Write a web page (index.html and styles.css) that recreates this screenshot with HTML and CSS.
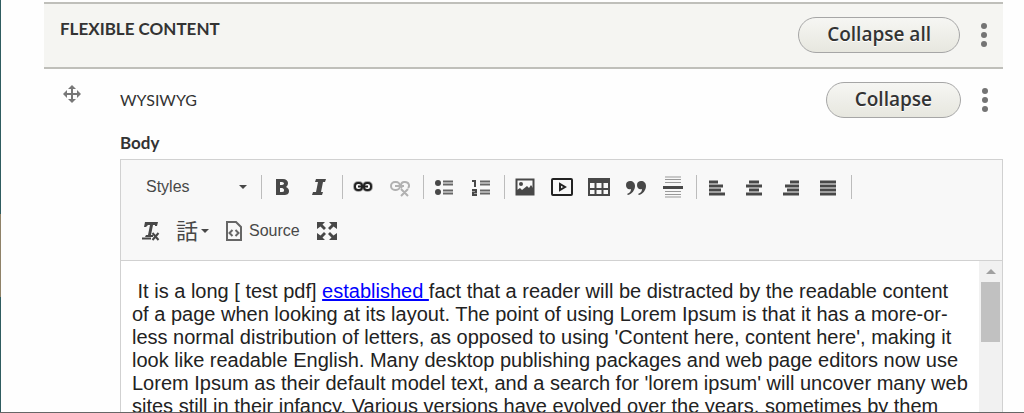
FILE: index.html
```html
<!DOCTYPE html>
<html lang="en">
<head>
  <meta charset="UTF-8" />
  <meta name="viewport" content="width=device-width, initial-scale=1.0" />
  <title>Edit content</title>
  <link rel="stylesheet" href="styles.css">
</head>
<body>
  <main class="page">
    <header class="field-header">
      <h4>FLEXIBLE CONTENT</h4>
      <div class="actions">
        <button type="button" class="btn">Collapse all</button>
        <button type="button" class="dots" aria-label="More actions"><svg width="8" height="26"><circle cx="4" cy="4" r="3"/><circle cx="4" cy="13" r="3"/><circle cx="4" cy="22" r="3"/></svg></button>
      </div>
    </header>

    <section class="paragraph">
      <a href="#" class="drag" aria-label="Drag to re-order">
        <svg width="18" height="18" viewBox="0 0 18 18"><path d="M9 0l4 4h-3v4h4V5l4 4-4 4v-3h-4v4h3l-4 4-4-4h3v-4H4v3L0 9l4-4v3h4V4H5z"/></svg>
      </a>
      <div class="paragraph-body">
        <div class="paragraph-top">
          <span class="type">WYSIWYG</span>
          <div class="actions">
            <button type="button" class="btn">Collapse</button>
            <button type="button" class="dots" aria-label="More actions"><svg width="8" height="26"><circle cx="4" cy="4" r="3"/><circle cx="4" cy="13" r="3"/><circle cx="4" cy="22" r="3"/></svg></button>
          </div>
        </div>
        <h5 class="label" id="body-label">Body</h5>

        <div class="editor">
          <div class="toolbar" role="toolbar" aria-label="Editor toolbar">
            <div class="tool-row">
              <button type="button" class="combo">Styles <span class="caret"></span></button>
              <span class="sep"></span>
              <button type="button" class="tool" aria-label="Bold"><svg width="20" height="20"><path fill-rule="evenodd" d="M4 2h7c3 0 5 2 5 4 0 2-1 3-2 4 2 1 3 2 3 4 0 3-2 4-5 4H4zm4 3v3h2c1 0 2-1 2-1.500S11 5 10 5zm0 6v4h2c2 0 2-1 2-2s-1-2-2-2z"/></svg></button>
              <button type="button" class="tool" aria-label="Italic"><svg width="20" height="20"><path d="M7 2h10l-1 3h-2l-2 10h2l-1 3H3l1-3h3L9 5H6z"/></svg></button>
              <span class="sep"></span>
              <button type="button" class="tool link" aria-label="Link"><svg width="20" height="20"><rect class="halo" x="1" y="5" width="9" height="9" rx="4"/><rect class="halo" x="10" y="5" width="9" height="9" rx="4"/><g class="line"><rect x="2" y="6" width="7" height="7" rx="3"/><rect x="11" y="6" width="7" height="7" rx="3"/><path d="M5 9.500h10"/></g></svg></button>
              <button type="button" class="tool" aria-label="Unlink" disabled><svg width="20" height="20"><g class="line"><rect x="1" y="5" width="9" height="8" rx="4"/><path d="M5 9h9M12 11c-2-2-1-6 2-6h1c4 0 5 4 3 6M11 12l7 7M18 12l-7 7"/></g></svg></button>
              <span class="sep"></span>
              <button type="button" class="tool" aria-label="Bulleted list"><svg width="20" height="20"><circle cx="4" cy="6" r="3"/><circle cx="4" cy="15" r="3"/><path class="lines" d="M9 4.500h10M9 7.500h10M9 13.500h10M9 16.500h10"/></svg></button>
              <button type="button" class="tool" aria-label="Numbered list"><svg width="20" height="20"><path class="line" d="M1 4h3v6M1 13h4v2.500H2V18h4"/><path class="lines" d="M9 4.500h10M9 7.500h10M9 13.500h10M9 16.500h10"/></svg></button>
              <span class="sep"></span>
              <button type="button" class="tool" aria-label="Image"><svg width="20" height="18"><path class="line" d="M1.500 1.500h17v15h-17z"/><circle cx="6" cy="6" r="2"/><path d="M2 16v-4l3-2 2 2 5-4 2 2 2-3 2 3v6z"/></svg></button>
              <button type="button" class="tool" aria-label="Video"><svg width="22" height="18"><rect class="line dark" x="1" y="1" width="20" height="16" rx="1"/><path class="line dark" d="M9 6v6l5-3z"/></svg></button>
              <button type="button" class="tool" aria-label="Table"><svg width="22" height="20"><path d="M0 1h22v5H0z"/><path class="line" d="M1 5v13h20V5M7.500 5v13M14.500 5v13M1 12h20"/></svg></button>
              <button type="button" class="tool" aria-label="Block quote"><svg width="20" height="16"><path d="M1 15c3-1 4-3 4-5-3 1-5-1-5-4s2-4 4-4c3 0 5 2 5 5 0 4-3 8-7 9z"/><path d="M12 15c3-1 4-3 4-5-3 1-5-1-5-4s2-4 4-4c3 0 5 2 5 5 0 4-3 8-7 9z"/></svg></button>
              <button type="button" class="tool" aria-label="Horizontal line"><svg width="20" height="22"><path class="light" d="M2 1h16M2 3.500h16M2 6.500h16M2 15.500h16M2 18.500h16M2 21h16"/><path d="M0 10h20v3H0z"/></svg></button>
              <span class="sep"></span>
              <button type="button" class="tool" aria-label="Align left"><svg width="18" height="18"><path class="bars" d="M1 4h9M1 8h14M1 12h12M1 16h16"/></svg></button>
              <button type="button" class="tool" aria-label="Align center"><svg width="18" height="18"><path class="bars" d="M4 4h10M1 8h16M4 12h10M1 16h16"/></svg></button>
              <button type="button" class="tool" aria-label="Align right"><svg width="18" height="18"><path class="bars" d="M8 4h9M3 8h14M5 12h12M1 16h16"/></svg></button>
              <button type="button" class="tool" aria-label="Justify"><svg width="18" height="18"><path class="bars" d="M1 4h16M1 8h16M1 12h16M1 16h16"/></svg></button>
              <span class="sep"></span>
            </div>
            <div class="tool-row">
              <button type="button" class="tool" aria-label="Remove format"><svg width="20" height="20"><path d="M4 1h13l-1 4h-2V4h-2l-2 10h2v2H4l1-2h2L9 4H7L5 6H3z"/><path class="line" d="M1 17.500h9M11.500 12l6 7M17.500 12l-6 7"/></svg></button>
              <button type="button" class="tool language" aria-label="Language"><span class="glyph">話</span><span class="caret"></span></button>
              <button type="button" class="source"><svg width="16" height="20"><path class="line" d="M1 1h9l5 5v13H1zM6.500 9l-3 3 3 3M9.500 9l3 3-3 3"/></svg>Source</button>
              <button type="button" class="tool" aria-label="Maximize"><svg width="20" height="20"><path d="M0 1h8L5.500 3.500 9 7 7 9 3.500 5.500 0 8zM20 1h-8l2.500 2.500L11 7l2 2 3.500-3.500L20 8zM0 19h8l-2.500-2.500L9 13l-2-2-3.500 3.500L0 12zM20 19h-8l2.500-2.500L11 13l2-2 3.500 3.500L20 12z"/></svg></button>
            </div>
          </div>
          <div class="content">
            <div class="text" role="textbox" aria-labelledby="body-label">
              <p>&nbsp;It is a long [ test pdf] <a href="#">established </a>fact that a reader will be distracted by the readable content of a page when looking at its layout. The point of using Lorem Ipsum is that it has a more-or-less normal distribution of letters, as opposed to using 'Content here, content here', making it look like readable English. Many desktop publishing packages and web page editors now use Lorem Ipsum as their default model text, and a search for 'lorem ipsum' will uncover many web sites still in their infancy. Various versions have evolved over the years, sometimes by them</p>
            </div>
            <div class="scrollbar" aria-hidden="true">
              <span class="scroll-up"></span>
              <span class="thumb"></span>
            </div>
          </div>
        </div>
      </div>
    </section>
  </main>
</body>
</html>
```
FILE: styles.css
```css
* {
  margin: 0;
  padding: 0;
  box-sizing: border-box;
}
body {
  display: flex;
  height: 100vh;
  overflow: hidden;
  background: #fefefe;
  color: #333;
  font-family: Lato, sans-serif;
  border-bottom: 1px solid #666;
}
body::before {
  content: "";
  width: 1px;
  background: linear-gradient(#2f5d60 52%, #8f8268 52% 72%, #2f5d60 72%);
}
button {
  border: 0;
  background: none;
  color: inherit;
  font: inherit;
  cursor: pointer;
}
.page {
  display: flex;
  flex-direction: column;
  flex: 1;
  min-width: 0;
  padding: 2px 21px 0 43px;
}
.field-header {
  display: flex;
  flex-shrink: 0;
  justify-content: space-between;
  height: 67px;
  padding: 13px 15px 0 16px;
  background: #f5f5f2;
  border-top: 2px solid #bfbfba;
  border-bottom: 2px solid #bfbfba;
}
.field-header h4 {
  font-size: 17px;
  line-height: 24px;
}
.actions {
  display: flex;
  align-items: center;
  gap: 20px;
  height: 36px;
}
.btn {
  height: 36px;
  padding: 0 28px 2px;
  border: 1px solid #a6a6a6;
  border-radius: 18px;
  background: linear-gradient(#f6f6f3, #e7e7df);
  font-family: "Open Sans", sans-serif;
  font-size: 19px;
  font-weight: 600;
  line-height: 32px;
  text-shadow: 0 1px #fff;
}
.dots {
  display: flex;
}
.dots svg {
  fill: #747474;
}
.paragraph {
  display: flex;
  flex: 1;
  min-height: 0;
}
.drag {
  flex: 0 0 76px;
  padding: 16px 0 0 19px;
}
.drag svg {
  fill: #787878;
}
.paragraph-body {
  display: flex;
  flex-direction: column;
  flex: 1;
  min-width: 0;
}
.paragraph-top {
  display: flex;
  justify-content: space-between;
  padding: 13px 14px 0 0;
}
.type {
  font-size: 16px;
  line-height: 36px;
}
.label {
  margin: 13px 0 4px;
  font-size: 17px;
  line-height: 24px;
}
.editor {
  display: flex;
  flex-direction: column;
  flex: 1;
  min-height: 0;
  border: 1px solid #d1d1d1;
  border-bottom: 0;
}
.toolbar {
  padding: 5px 11px 7px;
  background: #f8f8f8;
  border-bottom: 1px solid #d1d1d1;
  color: #484848;
  font: 16px "Liberation Sans", Arial, sans-serif;
}
.tool-row {
  display: flex;
  align-items: center;
  height: 44px;
}
.tool {
  display: flex;
  align-items: center;
  justify-content: center;
  flex: 0 0 37px;
  height: 36px;
}
.tool svg {
  fill: #484848;
}
.tool:disabled {
  opacity: 0.4;
}
.line {
  fill: none;
  stroke: #484848;
  stroke-width: 2;
}
.source .line {
  stroke: #666;
}
.dark,
.link .line {
  stroke: #222;
}
.halo {
  fill: none;
  stroke: #aaa;
  stroke-width: 2;
}
.lines {
  stroke: #666;
  stroke-width: 2;
}
.light {
  stroke: #999;
  stroke-width: 1;
}
.bars {
  stroke: #484848;
  stroke-width: 3;
}
.sep {
  width: 1px;
  height: 24px;
  margin: 0 1px 0 5px;
  background: #bcbcbc;
}
.combo {
  display: flex;
  align-items: center;
  justify-content: space-between;
  width: 124px;
  padding: 0 9px 0 14px;
}
.caret {
  border: 4px solid transparent;
  border-top-color: #484848;
  border-bottom: 0;
}
.language {
  flex-basis: 47px;
  gap: 3px;
}
.glyph {
  padding-bottom: 4px;
  font: 22px/20px "Noto Sans CJK JP", sans-serif;
}
.source {
  display: flex;
  align-items: center;
  gap: 7px;
  width: 92px;
  padding-left: 10px;
}
.content {
  display: flex;
  flex: 1;
  min-height: 0;
  overflow: hidden;
  background: #fff;
}
.text {
  flex: 1;
  padding: 19px 10px 0 11px;
  color: #222;
  font: 20px/23px "Liberation Sans", Arial, sans-serif;
}
.text a {
  color: #00f;
}
.scrollbar {
  display: flex;
  flex-direction: column;
  align-items: center;
  gap: 8px;
  width: 23px;
  padding-top: 8px;
  background: #f1f1f1;
}
.scroll-up {
  border: 5px solid transparent;
  border-bottom-color: #a0a0a0;
  border-top: 0;
}
.thumb {
  flex-shrink: 0;
  width: 19px;
  height: 60px;
  background: #c1c1c1;
}
```
